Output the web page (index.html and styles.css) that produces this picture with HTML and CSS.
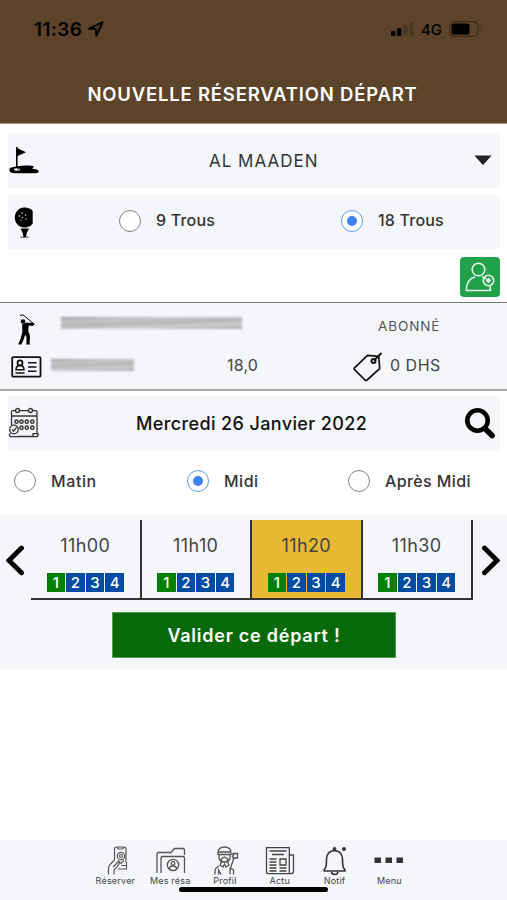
FILE: index.html
```html
<!DOCTYPE html>
<html lang="fr">
<head>
    <meta charset="UTF-8">
    <meta name="viewport" content="width=device-width, initial-scale=1.0">
    <title>Nouvelle réservation départ</title>
    <link rel="stylesheet" href="styles.css">
</head>
<body>
    <header>
        <div class="status-bar">
            <span class="clock">11:36</span>
            <svg class="location" width="16" height="16" viewBox="0 0 16 16"><path d="M1.2 7.6 14.5 1.3 8.4 14.6 7.9 8.1Z" fill="none" stroke="#000" stroke-width="2" stroke-linejoin="round"/></svg>
            <svg class="signal" width="24" height="14" viewBox="0 0 24 14"><rect x="0" y="9" width="4.500" height="5" rx="1"/><rect x="6" y="6" width="4.500" height="8" rx="1"/><rect x="12.500" y="3" width="4" height="11" rx="1" opacity=".18"/><rect x="18.500" y="0" width="4" height="14" rx="1" opacity=".18"/></svg>
            <span class="network">4G</span>
            <svg class="battery" width="33" height="16" viewBox="0 0 33 16"><rect x=".7" y=".7" width="28" height="14.500" rx="4" fill="none" stroke="#000" stroke-opacity=".4"/><rect x="2.500" y="2.500" width="18" height="11" rx="2.500"/><path d="M30.500 5.500q2.200 2.500 0 5z" opacity=".45"/></svg>
        </div>
        <h1>NOUVELLE RÉSERVATION DÉPART</h1>
    </header>

    <main>
        <div class="row course">
            <svg class="row-icon" width="32" height="28" viewBox="0 0 32 28"><path d="M7 0h1.600v1.200L17 5.200 8.600 9v10.300c5-.9 14-1 16.200 0 .8.800-1.800 1.600-1.400 2.300.7.800 6 .5 6.300 2.600.2 1.600-1.700 2-4 2H5c-3.500 0-5-1.400-4.600-3.600.3-2 3.100-2.500 6.600-3z"/><ellipse cx="8" cy="22.500" rx="3" ry="1.200" fill="#f5f6fa"/><circle cx="9" cy="22" r=".8"/></svg>
            <span class="course-name">AL MAADEN</span>
            <svg class="caret" width="18" height="10" viewBox="0 0 18 10"><path d="M.4.500h17.200L9.600 9.400q-.6.500-1.200 0z" fill="#222"/></svg>
        </div>

        <div class="row holes">
            <svg class="row-icon" width="20" height="31" viewBox="0 0 20 31"><path d="M10 .5c4 0 8 1.600 8.700 4v12c-1.700 2.900-4.700 4-8.200 4C4.700 20.500.8 16 .8 10.500S5 .5 10 .5z"/><path d="M6.500 21.500h8.600l-2.200 4-1 4.300h2.700v.8H6.300v-.8h3.200l-1-4.300z"/><g fill="#e6e7eb"><circle cx="8" cy="6" r=".8"/><circle cx="5.500" cy="9" r=".8"/><circle cx="11.500" cy="8" r=".8"/><circle cx="8.500" cy="10.500" r=".7"/><circle cx="12" cy="12" r=".7"/><circle cx="7" cy="13" r=".6"/></g></svg>
            <span class="radio"></span>
            <span class="option nine">9 Trous</span>
            <span class="radio checked"></span>
            <span class="option eighteen">18 Trous</span>
        </div>

        <div class="add-line">
            <button class="add-player" aria-label="Ajouter un joueur">
                <svg width="40" height="40" viewBox="0 0 40 40" fill="none" stroke="#e4f7e9" stroke-width="1.600" stroke-linejoin="round"><circle cx="18.500" cy="12.500" r="6.300"/><path d="M22 19.700c2 .5 3 1.100 4.500 2.200M15 19.700C9 21.500 6.300 26 6.300 33.500h24V29"/><circle cx="28.500" cy="23.500" r="5.200"/><path d="M28.500 21v5M26 23.500h5" stroke-width="2"/></svg>
            </button>
        </div>

        <section class="player">
            <div class="player-line first">
                <svg class="golfer" width="18" height="31" viewBox="0 0 18 31"><circle cx="5" cy="7.500" r="2.300"/><path d="M2 1.500 5 .8 16 10" fill="none" stroke="#000" stroke-width="1"/><path d="M4 10.500 7.600 8.700 14.500 8.700 16.800 10.300 14.700 12 10.700 11.600 10.300 17 12 22 11.600 29.300 12.300 30.500H8.300L8.500 23 7.200 20.800 5.200 26.700 3.200 30.500H.2L2.500 25 4.400 17.800z"/></svg>
                <span class="masked name"></span>
                <span class="status">ABONNÉ</span>
            </div>
            <div class="player-line second">
                <svg class="card" width="31" height="22" viewBox="0 0 31 22" fill="none" stroke="#111" stroke-width="1.800"><rect x="1.200" y="1.200" width="28.300" height="19.500" rx="1"/><circle cx="9" cy="6.900" r="2.500"/><path d="M5 13.800c0-3 1.300-4.300 4-4.300s4 1.300 4 4.300zM4.500 17h9M17 6.700h8.500M17 11h8.500M17 15.300h8.500" stroke-width="1.500"/></svg>
                <span class="masked licence"></span>
                <span class="index">18,0</span>
                <svg class="tag" width="30" height="31" viewBox="0 0 30 31" fill="none" stroke="#111" stroke-width="1.700" stroke-linejoin="round"><path d="M14.500 4.300 25.700 5.300 26.700 17.700 14 29q-1 .7-2 0L1.500 18.600q-.7-1 0-1.700z"/><circle cx="20.500" cy="10" r="2" stroke-width="2"/><path d="M21 9.500 28.500 2" stroke-width="2"/></svg>
                <span class="price">0 DHS</span>
            </div>
        </section>

        <div class="row date">
            <svg class="row-icon" width="32" height="32" viewBox="0 0 32 32" fill="none" stroke="#333" stroke-width="1.300"><path d="M3.500 18V5q0-1.300 1.300-1.300h3M11 3.700h9.500M24.700 3.700h3q1.300 0 1.300 1.300v22M3.500 9H29M10 29.500h15M25 29.500v-2.800h5v1q0 2-2 2H3q-1.500 0-1.500-2.500h1"/><circle cx="9.500" cy="3.500" r="2"/><circle cx="22.500" cy="3.500" r="2"/><g stroke-width="1.500"><circle cx="8.500" cy="14.700" r="1.600"/><circle cx="13.500" cy="14.700" r="1.600"/><circle cx="18.800" cy="14.700" r="1.600"/><circle cx="24.300" cy="14.700" r="1.600"/><circle cx="13.500" cy="20.700" r="1.600"/><circle cx="18.800" cy="20.700" r="1.600"/><circle cx="24.300" cy="20.700" r="1.600"/></g><circle cx="6" cy="22.500" r="4.300"/><path d="m4 22.500 1.700 1.700 3-4"/></svg>
            <span class="date-text">Mercredi 26 Janvier 2022</span>
            <svg class="search" width="30" height="31" viewBox="0 0 30 31" fill="none" stroke="#000"><circle cx="12.500" cy="12.500" r="10.200" stroke-width="4.600"/><path d="m20 20.500 7 7" stroke-width="5.600" stroke-linecap="round"/></svg>
        </div>

        <div class="periods">
            <span class="radio"></span>
            <span class="option matin">Matin</span>
            <span class="radio checked"></span>
            <span class="option midi">Midi</span>
            <span class="radio"></span>
            <span class="option apres">Après Midi</span>
        </div>

        <section class="departures">
            <div class="carousel">
                <svg class="arrow" width="18" height="31" viewBox="0 0 18 31"><path d="M15.500 3 3 15.500l12.500 12.300" fill="none" stroke="#000" stroke-width="4.800" stroke-linecap="round"/></svg>
                <div class="slots">
                    <div class="slot">
                        <span class="time">11h00</span>
                        <div class="places"><b class="taken">1</b><b>2</b><b>3</b><b>4</b></div>
                    </div>
                    <div class="slot">
                        <span class="time">11h10</span>
                        <div class="places"><b class="taken">1</b><b>2</b><b>3</b><b>4</b></div>
                    </div>
                    <div class="slot selected">
                        <span class="time">11h20</span>
                        <div class="places"><b class="taken">1</b><b>2</b><b>3</b><b>4</b></div>
                    </div>
                    <div class="slot">
                        <span class="time">11h30</span>
                        <div class="places"><b class="taken">1</b><b>2</b><b>3</b><b>4</b></div>
                    </div>
                </div>
                <svg class="arrow" width="18" height="31" viewBox="0 0 18 31"><path d="M2.500 3 15 15.500 2.500 27.800" fill="none" stroke="#000" stroke-width="4.800" stroke-linecap="round"/></svg>
            </div>
            <button class="validate">Valider ce départ !</button>
        </section>
    </main>

    <nav>
        <a class="tab">
            <svg width="32" height="30" viewBox="0 0 32 30" fill="none" stroke="#555" stroke-width="1.200"><path d="M15.500 14V3q0-2 2-2h7.500q2 0 2 2v13M18.500 1.500q0 1.500 1.500 1.500h3q1.500 0 1.500-1.500"/><circle cx="22" cy="10" r="3.700"/><circle cx="22" cy="10" r="1.500"/><path d="M19 14.500l3 3 3-3M15.500 14l-4 4q-2 2-2 5v5.500M15 28.500V25q0-2 2-3l3-4q1-3-1-2l-5 5M22 19.500h5.500M19 23h8.500V16"/></svg>
            <span>Réserver</span>
        </a>
        <a class="tab">
            <svg width="32" height="30" viewBox="0 0 32 30" fill="none" stroke="#555" stroke-width="1.300"><path d="M3 27V8q0-1.500 1.500-1.500H17L20.500 2.500H29q1.500 0 1.500 1.500v5M7 27V12q0-1.500 1.500-1.500h20.500q1.500 0 1.500 1.500v15"/><circle cx="19" cy="19" r="5.700"/><circle cx="19" cy="17.500" r="1.800"/><path d="M15.500 23c0-4 7-4 7 0"/></svg>
            <span>Mes résa</span>
        </a>
        <a class="tab">
            <svg width="32" height="30" viewBox="0 0 32 30" fill="none" stroke="#555" stroke-width="1.300"><path d="M9 8.500V7q0-6 6.500-6T22 7v1.500zM9 6h13M10 8.500v4q1 3 3 4M21 8.500v4q-1 3-3 4M12 13l3.500-2 3.500 2-1.500 3h-4zM12.500 16l-1.500 3 3 2 1.500-3 1.500 3 3-2-1.500-3M10 20q-4 2-4 5v3.500M9.500 28.500V24l2.500 4.500M21 22v6.500M24.500 28.500V24l-3-2 3.500-10M24 7.500h4.500v4.500H24zM23 11l3-4"/></svg>
            <span>Profil</span>
        </a>
        <a class="tab">
            <svg width="32" height="30" viewBox="0 0 32 30" fill="none" stroke="#444" stroke-width="1.300"><path d="M2.500 1.700h22.800v26H4.500q-2 0-2-2zM25.300 9h4.200v16q0 2.700-2.500 2.700h-4M5.500 5h17M8 8.500h12M5.500 13h7M5.500 16h7M5.500 19h7M5.500 22h7M5.500 25h7M15.500 22h7M15.500 25h7"/><path d="M16 13h6v6h-6z"/></svg>
            <span>Actu</span>
        </a>
        <a class="tab">
            <svg width="32" height="30" viewBox="0 0 32 30" fill="none" stroke="#333" stroke-width="1.600"><path d="M15.500 4.500Q8 5 7.500 13q0 8-1.500 9.500-2 2.500 0 2.500h19.500q1.500 0-.500-2.500-1.500-1.500-1.500-9.500Q23 5 15.500 4.500zM12.500 26q.2 2.500 3.200 2.500t3.200-2.500"/><circle cx="15.500" cy="2.800" r="1.100"/><circle cx="25" cy="3" r="2" fill="#333" stroke="none"/></svg>
            <span>Notif</span>
        </a>
        <a class="tab">
            <svg width="32" height="30" viewBox="0 0 32 30" fill="#333"><rect x="1.500" y="11.500" width="6.500" height="5.500"/><rect x="12.500" y="11.500" width="6.500" height="5.500"/><rect x="23.500" y="11.500" width="6.500" height="5.500"/></svg>
            <span>Menu</span>
        </a>
        <div class="home-indicator"></div>
    </nav>
</body>
</html>
```

FILE: styles.css
```css
* {
    box-sizing: border-box;
}
body {
    margin: 0;
    height: 900px;
    display: flex;
    flex-direction: column;
    overflow: hidden;
    font-family: Inter, "Open Sans", sans-serif;
    color: #333;
    background: #fff;
}
svg {
    display: block;
    flex: none;
}
span {
    white-space: nowrap;
}
button {
    padding: 0;
    border: none;
    font-family: inherit;
}
header {
    height: 124px;
    background: #5c4329;
    border-bottom: 1px solid #a39684;
}
.status-bar {
    display: flex;
    align-items: center;
    height: 58px;
    padding: 0 25px 0 34px;
    color: #000;
}
.clock {
    width: 54px;
    font-size: 19px;
    font-weight: 600;
    letter-spacing: 0.4px;
}
.signal {
    margin-left: auto;
}
.network {
    width: 28px;
    margin-left: 6px;
    font-size: 15px;
    font-weight: 500;
}
h1 {
    margin: 24px 0 0;
    padding-right: 2px;
    text-align: center;
    line-height: 24px;
    font-size: 18.5px;
    font-weight: 600;
    letter-spacing: 0.8px;
    color: #fff;
}
main {
    flex: 1;
}
.row {
    display: flex;
    align-items: center;
    height: 54px;
    margin: 0 7px 0 8px;
    background: #f5f6fa;
}
.course {
    margin-top: 10px;
}
.course .row-icon {
    margin-left: 1px;
}
.course-name {
    margin-left: 168px;
    width: 265px;
    font-size: 17px;
    letter-spacing: 1px;
}
.caret {
    margin-top: -3px;
}
.holes {
    margin-top: 7px;
}
.holes .row-icon {
    margin: 0 85px 0 6px;
}
.holes .radio {
    margin-top: -2px;
}
.holes .option {
    margin-top: -4px;
}
.radio {
    flex: none;
    display: flex;
    width: 22px;
    height: 22px;
    border: 1.5px solid #858585;
    border-radius: 50%;
    background: #fff;
}
.radio.checked {
    border-color: #639bed;
}
.radio.checked::after {
    content: "";
    width: 10px;
    height: 10px;
    margin: auto;
    border-radius: 50%;
    background: #3e82f0;
}
.option {
    padding-left: 15px;
    font-size: 16px;
    font-weight: 500;
    letter-spacing: 0.2px;
}
.option.nine {
    width: 200px;
}
.add-line {
    display: flex;
    justify-content: flex-end;
    height: 53px;
    padding: 8px 7px 0 0;
}
.add-player {
    width: 40px;
    height: 40px;
    border-radius: 4px;
    background: #22a14b;
}
.player {
    height: 89px;
    border-top: 1px solid #777;
    border-bottom: 2px solid #aaa;
    background: #f5f6fa;
}
.player-line {
    display: flex;
    align-items: center;
}
.player-line.first {
    height: 45px;
    padding: 7px 0 0 18px;
}
.player-line.second {
    height: 36px;
    padding: 0 0 2px 11px;
}
.card {
    margin-top: 3px;
}
/* names are hidden behind a smear */
.masked {
    height: 12px;
    filter: blur(1.2px);
    background: linear-gradient(178deg, #999 0, #c8c8cb 25%, #b5b5b8 50%, #cfcfd2 72%, #aaa 100%);
}
.name {
    width: 181px;
    margin: -13px 136px 0 25px;
}
.status {
    margin-top: -7px;
    font-size: 13.5px;
    letter-spacing: 0.9px;
    color: #555;
}
.licence {
    width: 83px;
    margin: 0 93px 0 9px;
}
.index {
    width: 126px;
    font-size: 16px;
    letter-spacing: 0.2px;
    color: #444;
}
.tag {
    margin-top: 2px;
}
.price {
    margin-left: 7px;
    font-size: 16px;
    letter-spacing: 0.5px;
    color: #444;
}
.date {
    margin-top: 5px;
}
.date-text {
    width: 329px;
    margin-left: 96px;
    font-size: 18px;
    font-weight: 500;
    letter-spacing: 0.38px;
    color: #111;
}
.periods {
    display: flex;
    align-items: center;
    height: 65px;
    padding: 0 0 3px 14px;
}
.matin {
    width: 151px;
    letter-spacing: 0.6px;
}
.midi {
    width: 139px;
    letter-spacing: 0.5px;
}
.apres {
    letter-spacing: 0.4px;
}
.departures {
    height: 154px;
    padding: 5px 0 0 6px;
    background: #f5f6fa;
}
.carousel {
    display: flex;
    align-items: center;
    height: 80px;
}
.slots {
    display: flex;
    width: 442px;
    height: 80px;
    margin: 0 9px 0 7px;
    border-bottom: 2px solid #333;
}
.slot {
    flex: 1;
    padding-top: 13px;
    border-right: 2px solid #333;
    text-align: center;
}
.slot.selected {
    background: #e8b932;
}
.time {
    display: block;
    line-height: 26px;
    font-size: 18px;
    letter-spacing: 0.4px;
    color: #444;
}
.places {
    display: flex;
    justify-content: center;
    gap: 1px;
    margin-top: 14px;
}
.places b {
    width: 18.6px;
    height: 19px;
    line-height: 19px;
    font-size: 15px;
    font-weight: 500;
    color: #fff;
    background: #004ca3;
}
.places .taken {
    background: #008000;
}
.validate {
    display: block;
    width: 284px;
    height: 46px;
    margin: 12px 0 0 106px;
    border: 1.5px solid #519d51;
    font-size: 18px;
    font-weight: 600;
    letter-spacing: 0.75px;
    color: #fff;
    background: #076907;
}
nav {
    position: relative;
    display: flex;
    height: 60px;
    padding-left: 88px;
    background: #f5f6fa;
}
.tab {
    display: flex;
    flex-direction: column;
    align-items: center;
    width: 54.8px;
    padding-top: 6px;
    font-size: 9px;
    line-height: 10px;
    letter-spacing: 0.2px;
    color: #444;
}
.home-indicator {
    position: absolute;
    left: 179px;
    bottom: 8px;
    width: 149px;
    height: 5px;
    border-radius: 3px;
    background: #000;
}
```
